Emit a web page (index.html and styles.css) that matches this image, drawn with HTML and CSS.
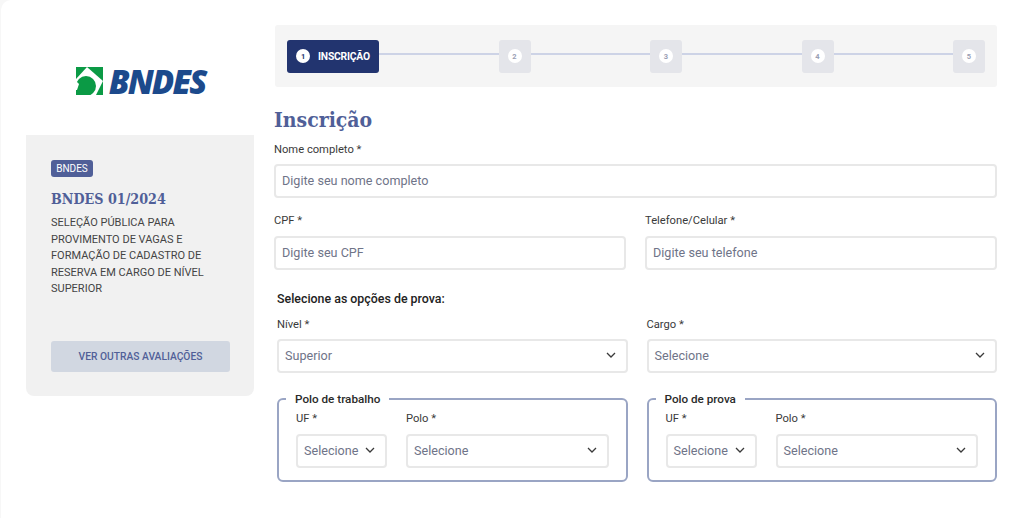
FILE: index.html
```html
<!DOCTYPE html>
<html lang="pt-BR">
<head>
    <meta charset="UTF-8">
    <meta name="viewport" content="width=device-width, initial-scale=1.0">
    <title>Inscrição - BNDES 01/2024</title>
    <link rel="stylesheet" href="styles.css">
</head>
<body>
    <div class="page">
        <aside class="sidebar">
            <div class="logo">
                <svg class="logo-icon" viewBox="0 0 27 28" width="27" height="28">
                    <rect width="27" height="28" fill="#0b9a45"/>
                    <path d="M0 12 L11 0 L27 14 L20 28 L0 28 Z" fill="#fff"/>
                    <circle cx="10" cy="19" r="10" fill="#0b9a45"/>
                    <rect x="0" y="19" width="10" height="9" fill="#0b9a45"/>
                    <path d="M0 14 L3 17 L1 23 L0 23 Z" fill="#fff"/>
                </svg>
                <span class="logo-text">BNDES</span>
            </div>
            <div class="card">
                <span class="badge">BNDES</span>
                <h2 class="card-title">BNDES 01/2024</h2>
                <p class="card-text">SELEÇÃO PÚBLICA PARA PROVIMENTO DE VAGAS E FORMAÇÃO DE CADASTRO DE RESERVA EM CARGO DE NÍVEL SUPERIOR</p>
                <button class="btn-other">VER OUTRAS AVALIAÇÕES</button>
            </div>
        </aside>

        <main class="content">
            <div class="stepper">
                <div class="step active"><span class="step-num">1</span>INSCRIÇÃO</div>
                <div class="step-line"></div>
                <div class="step"><span class="step-num">2</span></div>
                <div class="step-line"></div>
                <div class="step"><span class="step-num">3</span></div>
                <div class="step-line"></div>
                <div class="step"><span class="step-num">4</span></div>
                <div class="step-line"></div>
                <div class="step"><span class="step-num">5</span></div>
            </div>

            <h1 class="title">Inscrição</h1>

            <div class="field field-full">
                <label>Nome completo *</label>
                <input class="input" type="text" placeholder="Digite seu nome completo">
            </div>

            <div class="row">
                <div class="field">
                    <label>CPF *</label>
                    <input class="input" type="text" placeholder="Digite seu CPF">
                </div>
                <div class="field">
                    <label>Telefone/Celular *</label>
                    <input class="input" type="text" placeholder="Digite seu telefone">
                </div>
            </div>

            <h3 class="options-title">Selecione as opções de prova:</h3>

            <div class="options">
                <div class="row">
                    <div class="field">
                        <label>Nível *</label>
                        <div class="select">Superior<svg class="chev" viewBox="0 0 10 6" width="10" height="6"><path d="M1 1 L5 5 L9 1"/></svg></div>
                    </div>
                    <div class="field">
                        <label>Cargo *</label>
                        <div class="select">Selecione<svg class="chev" viewBox="0 0 10 6" width="10" height="6"><path d="M1 1 L5 5 L9 1"/></svg></div>
                    </div>
                </div>

                <div class="row polos">
                    <fieldset class="polo">
                        <legend>Polo de trabalho</legend>
                        <div class="field field-uf">
                            <label>UF *</label>
                            <div class="select">Selecione<svg class="chev" viewBox="0 0 10 6" width="10" height="6"><path d="M1 1 L5 5 L9 1"/></svg></div>
                        </div>
                        <div class="field field-polo">
                            <label>Polo *</label>
                            <div class="select">Selecione<svg class="chev" viewBox="0 0 10 6" width="10" height="6"><path d="M1 1 L5 5 L9 1"/></svg></div>
                        </div>
                    </fieldset>
                    <fieldset class="polo">
                        <legend>Polo de prova</legend>
                        <div class="field field-uf">
                            <label>UF *</label>
                            <div class="select">Selecione<svg class="chev" viewBox="0 0 10 6" width="10" height="6"><path d="M1 1 L5 5 L9 1"/></svg></div>
                        </div>
                        <div class="field field-polo">
                            <label>Polo *</label>
                            <div class="select">Selecione<svg class="chev" viewBox="0 0 10 6" width="10" height="6"><path d="M1 1 L5 5 L9 1"/></svg></div>
                        </div>
                    </fieldset>
                </div>
            </div>
        </main>
    </div>
</body>
</html>
```

FILE: styles.css
```css
* { margin: 0; padding: 0; box-sizing: border-box; }
html, body { height: 100%; overflow: hidden; }
body { font-family: Roboto, "Liberation Sans", sans-serif; background: #f7f7f7; color: #3a3a3a; }
.page { display: flex; gap: 20px; height: 100%; padding: 25px 26px 0 26px; margin-left: 1px; background: #fff; border-radius: 10px 0 0 0; }

.sidebar { width: 228px; flex-shrink: 0; margin-left: -1px; }
.logo { height: 110px; display: flex; align-items: center; justify-content: center; gap: 6px; padding-top: 3px; padding-left: 1px; }
.logo-icon { display: block; margin-top: -1px; }
.logo-text { font-family: "Open Sans", sans-serif; font-weight: 800; font-style: italic; font-size: 33px; line-height: 28px; letter-spacing: -1.9px; color: #1c4a8c; }

.card { background: #f1f1f1; border-radius: 0 0 8px 8px; height: 261px; padding: 25px 25px 0 25px; }
.badge { display: block; width: 42px; background: #505f98; color: #fff; font-size: 10px; line-height: 17px; text-align: center; border-radius: 3px; }
.card-title { font-family: "DejaVu Serif Condensed", "DejaVu Serif", serif; font-size: 14.2px; font-weight: 700; line-height: 20px; color: #505f98; margin-top: 12px; }
.card-text { font-size: 11px; line-height: 16.5px; color: #444; margin-top: 6px; }
.btn-other { display: block; width: 179px; height: 31px; margin-top: 43px; border: none; border-radius: 3px; background: #d1d7e1; color: #505f98; font-family: Roboto, sans-serif; font-size: 10.25px; font-weight: 500; }

.content { flex: 1; min-width: 0; }
.stepper { display: flex; align-items: center; height: 62px; margin-left: 1px; padding: 0 12px; background: #f5f5f5; border-radius: 3px; }
.step { display: flex; align-items: center; justify-content: center; width: 32px; height: 33px; background: #e4e5ea; border-radius: 3px; }
.step.active { width: 92px; justify-content: flex-start; padding-left: 9px; background: #22346f; color: #fff; font-size: 10.3px; font-weight: 700; gap: 8px; letter-spacing: -0.2px; }
.step-num { display: flex; align-items: center; justify-content: center; width: 14px; height: 14px; border-radius: 50%; background: #fff; color: #9aa0b4; font-size: 7.5px; font-weight: 700; }
.step.active .step-num { color: #22346f; }
.step-line { flex: 1; height: 2px; background: #cdd3e6; margin-top: -4px; }

.title { font-family: "DejaVu Serif Condensed", "DejaVu Serif", serif; font-size: 21px; font-weight: 700; line-height: 28px; color: #505f98; margin: 19px 0 0 0; }
label { display: block; font-size: 11.2px; line-height: 14px; color: #3a3a3a; margin-bottom: 8px; }
.field { flex: 1; min-width: 0; }
.field-full { margin-top: 9px; }
.field-full label { margin-bottom: 7px; }
.input, .select { width: 100%; height: 34px; border: 2px solid #e8e8e8; border-radius: 4px; background: #fff; font-family: Roboto, sans-serif; font-size: 12.6px; color: #6f7488; padding: 0 6px 2px; }
.input::placeholder { color: #6f7488; opacity: 1; }
.select { display: flex; align-items: center; justify-content: space-between; padding-right: 10px; }
.chev { display: block; flex-shrink: 0; fill: none; stroke: #3a3a3a; stroke-width: 1.3; }

.row { display: flex; gap: 19px; }
.row .field { margin-top: 16px; }
.options-title { font-size: 12.4px; font-weight: 500; line-height: 14px; color: #222; margin: 22px 0 0 3px; }
.options { padding-left: 3px; }
.options .row .field { margin-top: 12px; }
.options label { margin-bottom: 7px; }

.polos { margin-top: 27px; }
.polo { flex: 1; min-width: 0; display: flex; gap: 19px; height: 90px; border: 2px solid #9aa5c4; border-radius: 6px; padding: 0 17px; margin-top: -8px; }
.polo legend { font-size: 11.7px; font-weight: 500; color: #2a2a2a; margin-left: -10px; padding: 0 9px; line-height: 14px; }
.options .polo .field { margin-top: 6px; }
.polo label { margin-bottom: 8px; }
.options .polo .field-uf { flex: none; width: 91px; }
.field-polo { flex: 1; }
```
